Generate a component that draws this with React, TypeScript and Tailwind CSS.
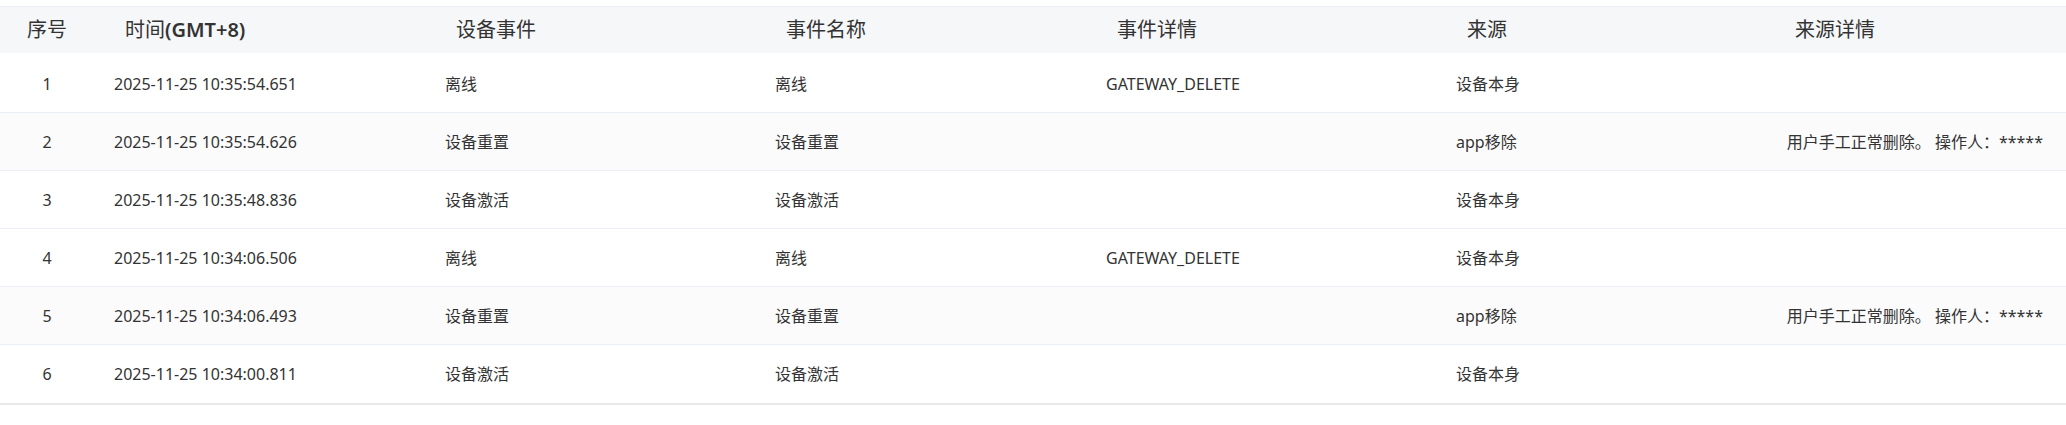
import React from "react";

type Row = {
  time: string;
  event: string;
  name: string;
  detail: string;
  source: string;
  sourceDetail: string;
};

const rows: Row[] = [
  { time: "2025-11-25 10:35:54.651", event: "离线", name: "离线", detail: "GATEWAY_DELETE", source: "设备本身", sourceDetail: "" },
  { time: "2025-11-25 10:35:54.626", event: "设备重置", name: "设备重置", detail: "", source: "app移除", sourceDetail: "用户手工正常删除。 操作人：*****" },
  { time: "2025-11-25 10:35:48.836", event: "设备激活", name: "设备激活", detail: "", source: "设备本身", sourceDetail: "" },
  { time: "2025-11-25 10:34:06.506", event: "离线", name: "离线", detail: "GATEWAY_DELETE", source: "设备本身", sourceDetail: "" },
  { time: "2025-11-25 10:34:06.493", event: "设备重置", name: "设备重置", detail: "", source: "app移除", sourceDetail: "用户手工正常删除。 操作人：*****" },
  { time: "2025-11-25 10:34:00.811", event: "设备激活", name: "设备激活", detail: "", source: "设备本身", sourceDetail: "" },
];

const cols = "grid grid-cols-[98px_331px_330px_331px_350px_328px_1fr]";

export default function App() {
  return (
    <div
      className="w-[2066px] h-[425px] bg-white pt-[6px] text-[#333] antialiased"
      style={{ fontFamily: '"Noto Sans", "Noto Sans CJK SC", sans-serif' }}
    >
      <div className="border-t border-[#ebeef5] border-b-2 border-b-[#e9e9eb]">
        {/* header */}
        <div className={`${cols} h-[46px] items-center bg-[#f6f7f9] text-[20px] text-[#333]`}>
          <div className="text-center pr-[4px]">序号</div>
          <div className="pl-[27px]">
            时间<span className="font-semibold">(GMT+8)</span>
          </div>
          <div className="pl-[27px]">设备事件</div>
          <div className="pl-[27px]">事件名称</div>
          <div className="pl-[27px]">事件详情</div>
          <div className="pl-[27px]">来源</div>
          <div className="pl-[27px]">来源详情</div>
        </div>

        <div className="pt-[2px]">
          {rows.map((r, i) => (
            <div
              key={i}
              className={`${cols} h-[58px] items-center text-[16px] border-b border-[#ebeef5] last:border-b-0 ${
                i === 1 || i === 4 ? "bg-[#fbfbfc]" : "bg-white"
              }`}
            >
              <div className="text-center pr-[4px]">{i + 1}</div>
              <div className="pl-4">{r.time}</div>
              <div className="pl-4">{r.event}</div>
              <div className="pl-4">{r.name}</div>
              <div className="pl-4">{r.detail}</div>
              <div className="pl-4">{r.source}</div>
              <div className="text-right pr-[23px] whitespace-nowrap">{r.sourceDetail}</div>
            </div>
          ))}
        </div>
      </div>
    </div>
  );
}
